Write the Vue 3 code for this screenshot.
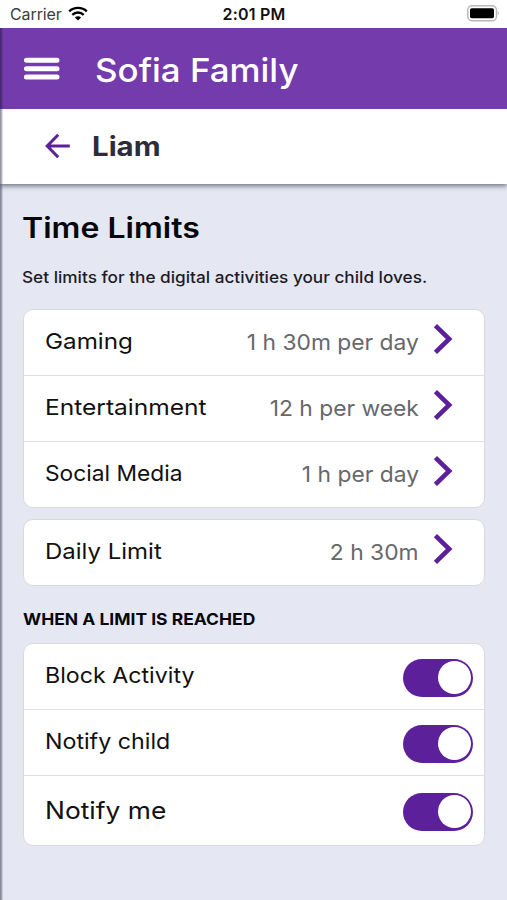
<script setup>
import { ref } from 'vue'

const limits = [
  { name: 'Gaming', value: '1 h 30m per day', key: 'gaming' },
  { name: 'Entertainment', value: '12 h per week', key: 'entertainment' },
  { name: 'Social Media', value: '1 h per day', key: 'social' },
]
const actions = ref([
  { name: 'Block Activity', key: 'block', on: true },
  { name: 'Notify child', key: 'child', on: true },
  { name: 'Notify me', key: 'me', on: true },
])
</script>

<template>
  <div class="screen">
    <div class="status">
      <div class="carrier">
        <span>Carrier</span>
        <svg class="wifi" viewBox="0 0 20 15" width="20" height="15">
          <path d="M1.2 5.4C6 .8 14 .8 18.8 5.4" />
          <path d="M4.3 8.8C7.5 5.7 12.5 5.7 15.7 8.8" />
          <path class="dot" d="M6.9 11.4C8.7 9.8 11.3 9.8 13.1 11.4L10 14.6Z" />
        </svg>
      </div>
      <span class="clock">2:01 PM</span>
      <svg class="battery" viewBox="0 0 34 18" width="34" height="18">
        <rect x="1.7" y="0.7" width="28.8" height="15" rx="4.5" fill="#fff" stroke="#b9b9b9" stroke-width="1.5" />
        <rect x="4" y="3.2" width="24" height="10" rx="1.8" fill="#000" />
        <path d="M31.7 6Q34 8.2 31.7 10.5Z" fill="#b9b9b9" />
      </svg>
    </div>

    <header class="appbar">
      <svg class="menu" viewBox="0 0 36 24" width="36" height="24">
        <path d="M2.4 3.2H33M2.4 11.7H33M2.4 20H33" />
      </svg>
      <h1>Sofia Family</h1>
    </header>

    <div class="subbar">
      <svg class="back" viewBox="0 0 26 26" width="26" height="26">
        <path d="M24.8 13H2.2M13.2 1.7L2.2 13L13.2 24.3" />
      </svg>
      <h2>Liam</h2>
    </div>

    <main class="content">
      <h3 class="title">Time Limits</h3>
      <p class="intro">Set limits for the digital activities your child loves.</p>

      <section class="card">
        <div v-for="l in limits" :key="l.key" class="row limit">
          <span class="label" :class="l.key">{{ l.name }}</span>
          <span class="value">{{ l.value }}</span>
          <svg class="chevron" viewBox="0 0 20 32" width="20" height="32">
            <path d="M2.4 2.6L16.2 16L2.4 29.4" />
          </svg>
        </div>
      </section>

      <section class="card daily-card">
        <div class="row limit">
          <span class="label daily">Daily Limit</span>
          <span class="value">2 h 30m</span>
          <svg class="chevron" viewBox="0 0 20 32" width="20" height="32">
            <path d="M2.4 2.6L16.2 16L2.4 29.4" />
          </svg>
        </div>
      </section>

      <h4 class="section">WHEN A LIMIT IS REACHED</h4>

      <section class="card">
        <div v-for="a in actions" :key="a.key" class="row action" :class="a.key">
          <span class="label" :class="a.key">{{ a.name }}</span>
          <button class="toggle" :class="{ on: a.on }" role="switch" :aria-checked="a.on" @click="a.on = !a.on">
            <span class="knob"></span>
          </button>
        </div>
      </section>
    </main>
  </div>
</template>

<style>
body {
  margin: 0;
  overflow: hidden;
}
</style>

<style scoped>
.screen {
  position: relative;
  box-sizing: border-box;
  width: 507px;
  height: 900px;
  display: flex;
  flex-direction: column;
  background: #e5e7f3;
  font-family: Inter, "Liberation Sans", sans-serif;
  color: #111;
  overflow: hidden;
  white-space: nowrap;
}
/* shaded edge along the left of the sliding screen */
.screen::after {
  content: "";
  position: absolute;
  z-index: 3;
  left: 0;
  top: 28px;
  bottom: 0;
  width: 3px;
  background: linear-gradient(to right, rgba(20, 20, 40, 0.5), rgba(20, 20, 40, 0.35) 45%, rgba(20, 20, 40, 0.05));
}
h1, h2, h3, h4, p { margin: 0; }
svg { flex: none; fill: none; }

/* widened letterforms */
h1, h2, .title, .intro, .section, .label { transform: scaleX(var(--wide, 1)); transform-origin: left center; }

.status {
  height: 28px;
  flex: none;
  box-sizing: border-box;
  padding: 0 7px 0 10px;
  display: grid;
  grid-template-columns: 1fr auto 1fr;
  align-items: center;
  background: #fff;
  font-size: 16px;
  line-height: 28px;
}
.carrier { display: flex; align-items: center; gap: 6px; color: #3c3c3c; letter-spacing: -0.1px; }
.wifi { margin-top: -1px; }
.wifi path { stroke: #000; stroke-width: 2.3; }
.wifi .dot { fill: #000; stroke: none; }
.clock { font-weight: 600; font-size: 16px; letter-spacing: 0.2px; margin-right: 2px; }
.battery { justify-self: end; }

.appbar {
  position: relative;
  z-index: 2;
  height: 80.5px;
  flex: none;
  box-sizing: border-box;
  display: flex;
  align-items: center;
  gap: 36px;
  padding: 0 0 0 24px;
  background: #733bab;
  color: #fff;
}
.menu { margin-top: 1px; }
.menu path { stroke: #fff; stroke-width: 5; stroke-linecap: round; }
.appbar h1 { --wide: 1.058; margin-left: -1px; font-size: 33px; font-weight: 500; line-height: 40px; padding-top: 4px; }

.subbar {
  position: relative;
  z-index: 1;
  height: 75.5px;
  flex: none;
  box-sizing: border-box;
  display: flex;
  align-items: center;
  gap: 21px;
  padding: 0 0 0 44.5px;
  background: #fff;
  box-shadow: 0 2px 5px rgba(30, 35, 45, 0.6);
}
.back path { stroke: #5c209b; stroke-width: 3; }
.subbar h2 { --wide: 1.11; font-size: 26.5px; font-weight: 700; color: #2c2c3a; line-height: 32px; }

.content { padding: 0 22px 0 22.5px; }
.title { --wide: 1.145; margin-top: 26px; margin-left: -0.7px; width: 380px; font-size: 28px; font-weight: 600; line-height: 36px; color: #08080c; }
.intro { --wide: 1.075; margin-top: 19px; margin-left: -0.5px; width: 380px; height: 24px; line-height: 24px; font-size: 16px; font-weight: 450; color: #1c1c26; }

.card {
  box-sizing: border-box;
  margin-top: 19.5px;
  background: #fff;
  border: 1.5px solid #d9dadf;
  border-radius: 10px;
}
.row {
  box-sizing: border-box;
  height: 66px;
  display: flex;
  align-items: center;
  padding: 0 31px 0 21.3px;
  border-bottom: 1.5px solid #dfe0e3;
}
.row:last-child { border-bottom: 0; height: 65px; }
.label { flex: 1; font-size: 22px; line-height: 28px; }
.limit .label, .limit .value { padding-bottom: 2px; }
.value { font-size: 22px; line-height: 28px; color: #66686c; padding-top: 1px; transform: scaleX(1.037); transform-origin: right center; }
.chevron { margin: -7px 0 0 14px; }
.chevron path { stroke: #5c209b; stroke-width: 4.6; }
.label.gaming { --wide: 1.1; }
.label.entertainment { --wide: 1.115; }
.label.social { --wide: 1.034; }
.label.daily { --wide: 1.09; }
.label.block, .label.child { --wide: 1.055; }
.daily-card { margin-top: 11px; }

.section { --wide: 1.092; margin-top: 21px; width: 380px; height: 24px; line-height: 24px; font-size: 16px; font-weight: 700; color: #08080c; }
.section + .card { margin-top: 12.5px; }
.row.action { padding-right: 11px; }
.action .label { padding-bottom: 3px; }
.row.me { height: 69px; }
.action .label.me { --wide: 1.1; font-size: 24px; padding-bottom: 0; }

.toggle {
  box-sizing: border-box;
  width: 70px;
  height: 38px;
  margin-top: 2px;
  padding: 2px;
  border: 0;
  border-radius: 19px;
  display: flex;
  align-items: center;
  background: #b9b9c4;
}
.toggle.on { background: #5c209b; justify-content: flex-end; }
.knob { width: 33px; height: 33px; border-radius: 50%; background: #fff; }
</style>
